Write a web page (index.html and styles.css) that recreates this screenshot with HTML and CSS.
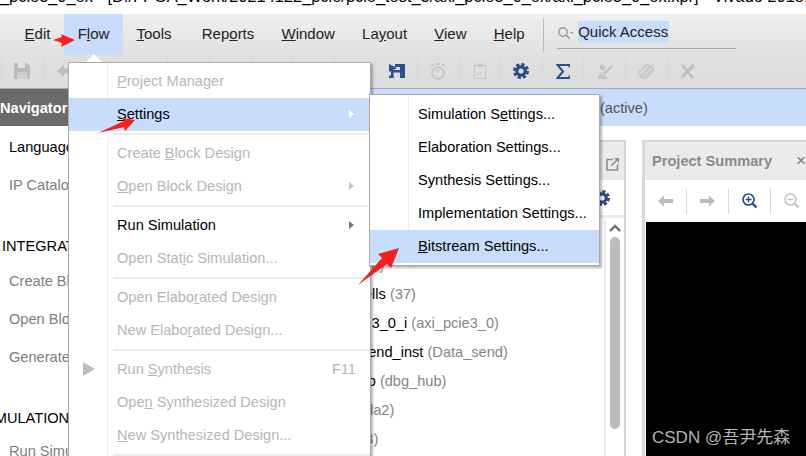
FILE: index.html
```html
<!DOCTYPE html>
<html lang="en">
<head>
<meta charset="UTF-8" />
<meta name="viewport" content="width=device-width, initial-scale=1" />
<title>Vivado - Flow menu</title>
<link rel="stylesheet" href="styles.css">
</head>
<body>
  <div class="app">
    <div class="titlebar"><div class="title-text">axi_pcie3_0_ex - [D:/FPGA_Work/20214122_pcie/pcie_test_3/axi_pcie3_0_ex/axi_pcie3_0_ex.xpr] - Vivado 2018.3</div></div>

    <div class="menubar">
      <span class="menu-title"><u>E</u>dit</span>
      <span class="menu-title active">F<u>l</u>ow</span>
      <span class="menu-title tools"><u>T</u>ools</span>
      <span class="menu-title">Rep<u>o</u>rts</span>
      <span class="menu-title"><u>W</u>indow</span>
      <span class="menu-title">La<u>y</u>out</span>
      <span class="menu-title"><u>V</u>iew</span>
      <span class="menu-title"><u>H</u>elp</span>
      <div class="quick-access">
        <svg class="search-icon" width="17" height="14" viewBox="0 0 17 14"><circle cx="6" cy="6" r="4.2" fill="none" stroke="#999" stroke-width="1.4"/><path d="M9 9l3.5 3.5" stroke="#999" stroke-width="1.6"/><path d="M13 6h3.4l-1.7 2z" fill="#999"/></svg>
        <span class="quick-text">Quick Access</span>
      </div>
    </div>

    <div class="toolbar">
      <span class="tool"><svg width="16" height="16" viewBox="0 0 16 16"><path d="M0 0h13l3 3v13H0z" fill="#bcbcbc"/><rect x="4" y="0" width="7" height="5" fill="#e2e2e2"/><rect x="3" y="9" width="10" height="7" fill="#cfcfcf"/></svg></span>
      <span class="tool"><svg width="14" height="14" viewBox="0 0 14 14"><path d="M0 7l7-6v3.500h7v5H7V13z" fill="#bdbdbd"/></svg></span>
      <span class="tool"></span><span class="tool"></span><span class="tool"></span><span class="tool"></span><span class="tool"></span><span class="tool"></span><span class="tool"></span>
      <span class="tool"><svg width="16" height="16" viewBox="0 0 16 16"><g fill="#2f4f8c"><path d="M0 1l8 4-8 4z"/><rect x="6" y="1" width="10" height="3"/><rect x="11" y="1" width="5" height="14"/><rect x="2" y="7" width="9" height="2.500"/><rect x="2" y="7" width="2.500" height="8"/><rect x="0" y="12.500" width="4.500" height="2.500"/></g></svg></span>
      <span class="tool"><svg width="16" height="17" viewBox="0 0 16 17"><circle cx="8" cy="10" r="5.800" fill="none" stroke="#c6c6c6" stroke-width="2"/><path d="M8 6.500V10" stroke="#c6c6c6" stroke-width="1.500"/><path d="M1 3l3-2M15 3l-3-2M6 1h4" stroke="#c6c6c6" stroke-width="2"/></svg></span>
      <span class="tool"><svg width="12" height="16" viewBox="0 0 12 16"><rect x=".5" y="2.500" width="11" height="13" fill="none" stroke="#c6c6c6"/><rect x="3.500" y=".5" width="5" height="3.500" fill="#c6c6c6"/><path d="M3.500 9.500l2 2 3-4" fill="none" stroke="#c6c6c6"/></svg></span>
      <span class="tool"><svg width="16" height="16" viewBox="0 0 16 16"><circle cx="8" cy="8" r="4.200" fill="none" stroke="#2b4a85" stroke-width="3.200"/><circle cx="8" cy="8" r="6.600" fill="none" stroke="#2b4a85" stroke-width="2.800" stroke-dasharray="3.200 2"/></svg></span>
      <span class="tool"><svg width="14" height="15" viewBox="0 0 14 15"><path d="M13.500 3.500V1H1.500l5.500 6.500L1.500 14h12v-2.500" fill="none" stroke="#2f4f8c" stroke-width="2"/></svg></span>
      <span class="tool"><svg width="16" height="15" viewBox="0 0 16 15"><path d="M0 15l4-7 4 4 4 3z" fill="#c4c4c4"/><path d="M2 3l3-3 4 4-3 3zM6 9l9-8 1 1-8 9z" fill="#c0c0c0"/></svg></span>
      <span class="tool"><svg width="16" height="15" viewBox="0 0 16 15"><path d="M0 9l9-9 7 6-9 9z" fill="none" stroke="#c8c8c8" stroke-width="1.800"/><path d="M4 10l7-7M7 12l6-6M2 14L15 1" stroke="#c8c8c8" stroke-width="1.300"/></svg></span>
      <span class="tool"><svg width="15" height="15" viewBox="0 0 15 15"><path d="M2 1l11 13" stroke="#c0c0c0" stroke-width="2.500"/><path d="M14 1L3 12" stroke="#c0c0c0" stroke-width="3.500"/><path d="M1 14l3-3" stroke="#c0c0c0" stroke-width="1.500"/></svg></span>
    </div>

    <div class="head-row">
      <div class="nav-title">Navigator</div>
      <div class="active-bar">(active)</div>
    </div>

    <div class="workspace">
      <div class="left-col">
        <div class="nav-item dark">Language Templates</div>
        <div class="nav-item">IP Catalog</div>
        <div class="nav-head first">INTEGRATOR</div>
        <div class="nav-item">Create Block Design</div>
        <div class="nav-item">Open Block Design</div>
        <div class="nav-item">Generate Block Design</div>
        <div class="nav-head second">SIMULATION</div>
        <div class="nav-item">Run Simulation</div>
      </div>

      <div class="mid-col">
        <div class="panel">
          <div class="panel-head">
            <svg width="13" height="13" viewBox="0 0 13 13"><path d="M7 1.500H1v10.500h10.500V6.500" fill="none" stroke="#8c8c8c" stroke-width="1.600"/><path d="M5.500 7.500L12 1M8.500 .8H12.500V4.800" fill="none" stroke="#8c8c8c" stroke-width="1.600"/></svg>
          </div>
          <div class="panel-tools">
            <svg width="16" height="16" viewBox="0 0 16 16"><circle cx="8" cy="8" r="4.200" fill="none" stroke="#2b4a85" stroke-width="3.200"/><circle cx="8" cy="8" r="6.600" fill="none" stroke="#2b4a85" stroke-width="2.800" stroke-dasharray="3.200 2"/></svg>
          </div>
          <div class="tree-wrap">
            <div class="tree">
              <div class="tree-row top-row"><span class="sub">(Top)</span></div>
              <div class="tree-row r-cells">Leaf Cells <span class="sub">(37)</span></div>
              <div class="tree-row r-pcie">axi_pcie3_0_i <span class="sub">(axi_pcie3_0)</span></div>
              <div class="tree-row r-send">Data_send_inst <span class="sub">(Data_send)</span></div>
              <div class="tree-row r-hub">dbg_hub <span class="sub">(dbg_hub)</span></div>
              <div class="tree-row r-ila">u_ila <span class="sub">(ila2)</span></div>
              <div class="tree-row r-last">u_ila <span class="sub">(ila3)</span></div>
            </div>
            <div class="scroll">
              <svg width="14" height="8" viewBox="0 0 14 8"><path d="M2 7l5-5 5 5" fill="none" stroke="#6e6e6e" stroke-width="2.400"/></svg>
              <div class="thumb"></div>
            </div>
          </div>
        </div>
      </div>

      <div class="right-col">
        <div class="summary">
          <div class="summary-head"><span>Project Summary</span><span class="close">×</span></div>
          <div class="summary-tools">
            <span class="s-tool"><svg width="15" height="12" viewBox="0 0 15 12"><path d="M0 6l6-5.500V4h9v4H6v3.500z" fill="#bcbcbc"/></svg></span>
            <span class="s-tool"><svg width="15" height="12" viewBox="0 0 15 12"><path d="M15 6L9 .5V4H0v4h9v3.500z" fill="#bcbcbc"/></svg></span>
            <span class="s-tool"><svg width="16" height="16" viewBox="0 0 16 16"><circle cx="6.500" cy="6.500" r="5.500" fill="none" stroke="#2b4a85" stroke-width="1.600"/><path d="M3.500 6.500h6M6.500 3.500v6" stroke="#2b4a85" stroke-width="1.400"/><path d="M10.500 10.500l4 4" stroke="#2b4a85" stroke-width="2.400"/></svg></span>
            <span class="s-tool"><svg width="16" height="16" viewBox="0 0 16 16"><circle cx="6.500" cy="6.500" r="5.500" fill="none" stroke="#c4c4c4" stroke-width="1.600"/><path d="M3.500 6.500h6" stroke="#c4c4c4" stroke-width="1.400"/><path d="M10.500 10.500l4 4" stroke="#c4c4c4" stroke-width="2.400"/></svg></span>
          </div>
          <div class="canvas"><span class="watermark">CSDN @吾尹先森</span></div>
        </div>
      </div>
    </div>

    <!-- open menus sit over the window -->
    <div class="notch"></div>
    <div class="menu flow-menu">
      <div class="item off"><u>P</u>roject Manager</div>
      <div class="item on"><u>S</u>ettings<span class="more"></span></div>
      <div class="sep"></div>
      <div class="item off">Create <u>B</u>lock Design</div>
      <div class="item off"><u>O</u>pen Block Design<span class="more"></span></div>
      <div class="sep"></div>
      <div class="item">Run Simulation<span class="more"></span></div>
      <div class="item off">Open Stat<u>i</u>c Simulation...</div>
      <div class="sep"></div>
      <div class="item off">Open Elabo<u>r</u>ated Design</div>
      <div class="item off">New Elabo<u>r</u>ated Design...</div>
      <div class="sep"></div>
      <div class="item off"><span class="run-mark"></span>Run <u>S</u>ynthesis<span class="key">F11</span></div>
      <div class="item off">Ope<u>n</u> Synthesized Design</div>
      <div class="item off"><u>N</u>ew Synthesized Design...</div>
      <div class="sep"></div>
    </div>
    <div class="menu settings-menu">
      <div class="item">Simulation S<u>e</u>ttings...</div>
      <div class="item">Elaboration Settings...</div>
      <div class="item">Synthesis Settings...</div>
      <div class="item">Implementation Settin<u>g</u>s...</div>
      <div class="item on"><u>B</u>itstream Settings...</div>
    </div>

    <svg class="arrows" width="806" height="456" viewBox="0 0 806 456">
      <path d="M53 40l9-3-1-3 14 6-14 7 1-4z" fill="#f5201c"/>
      <path d="M98 133l26-12-2-3 13 2-10 11-1-4z" fill="#f5201c"/>
      <path d="M358 285l24-27-4-4 21-6-8 20-4-4z" fill="#f5201c"/>
    </svg>
  </div>
</body>
</html>
```

FILE: styles.css
```css
* {
  box-sizing: border-box;
}
body {
  margin: 0;
  background: #fff;
  font-family: "Liberation Sans", Arial, sans-serif;
  font-size: 14.6px;
  color: #000;
}
.app {
  position: relative;
  width: 806px;
  height: 456px;
  overflow: hidden;
}
.titlebar {
  height: 14px;
  overflow: hidden;
}
.title-text {
  margin-top: -12px;
  font-size: 16.4px;
  line-height: 16px;
  white-space: pre;
  text-indent: -21px;
}

/* menu bar */
.menubar {
  display: flex;
  height: 41px;
  padding-left: 11px;
  background: linear-gradient(#f0f0f0, #e0e0e0);
  color: #222;
}
.menu-title {
  padding: 0 13.6px;
  font-size: 15px;
  line-height: 40px;
}
.menu-title.active {
  background: #c8dcfb;
}
.menu-title.tools {
  margin-right: 3px;
}
.quick-access {
  position: relative;
  display: flex;
  align-items: center;
  width: 193px;
  height: 34px;
  margin: 4px 0 0 5px;
  padding-left: 13px;
  border-left: 1px solid #bbb;
  font-size: 15px;
}
.quick-access::after {
  content: "";
  position: absolute;
  left: 13px;
  right: 0;
  bottom: 3px;
  height: 1px;
  background: #aaa;
}
.search-icon {
  margin: 0 4px 4px 0;
  flex: none;
}
.quick-text {
  padding: 2px 1px 3px 0;
  margin-bottom: 6px;
  background: #c8dcfb;
  color: #222;
  line-height: 17px;
}

/* toolbar */
.toolbar {
  display: grid;
  grid-template-columns: repeat(17, 41.6px);
  align-items: center;
  height: 34px;
  padding: 0 0 1px 1px;
  background: linear-gradient(#e0e0e0, #dcdcdc);
  border-bottom: 1px solid #a8a8a8;
}
.tool {
  display: flex;
  align-items: center;
  justify-content: center;
  height: 30px;
  border-left: 1px solid #d8d8d8;
}

/* main area */
.head-row {
  display: flex;
  height: 37px;
  line-height: 38px;
}
.nav-title {
  width: 200px;
  flex: none;
  background: #6b6b6b;
  color: #fff;
  font-weight: bold;
}
.active-bar {
  flex: 1;
  padding-left: 400px;
  background: #c8dcfb;
  color: #555;
}
.workspace {
  display: flex;
  height: 330px;
}
.left-col {
  width: 200px;
  flex: none;
  padding-top: 2px;
}
.nav-item {
  height: 38px;
  padding-left: 9px;
  color: #7d7d7d;
  line-height: 38px;
  white-space: nowrap;
}
.nav-item.dark {
  color: #000;
}
.nav-head {
  height: 30px;
  line-height: 30px;
  white-space: nowrap;
}
.nav-head.first {
  margin: 27px 0 1px;
  padding-left: 2px;
}
.nav-head.second {
  margin: 27px 0 -1px;
  text-indent: -19px;
}
.mid-col {
  width: 426px;
  flex: none;
}
.panel {
  height: 316px;
  margin-top: 14px;
  border-top: 2px solid #d4d4d4;
  border-right: 2px solid #d4d4d4;
}
.panel-head {
  display: flex;
  justify-content: flex-end;
  align-items: center;
  height: 38px;
  padding: 6px 5px 0 0;
  background: #ebebeb;
}
.panel-tools {
  display: flex;
  justify-content: flex-end;
  align-items: center;
  height: 38px;
  padding-right: 14px;
  border-bottom: 3px solid #ebebeb;
}
.tree-wrap {
  display: flex;
}
.tree {
  flex: 1;
  white-space: nowrap;
}
.tree-row {
  height: 29px;
  line-height: 29px;
}
.sub {
  color: #858585;
}
.top-row {
  margin-top: 33px;
  padding-left: 151px;
}
.r-cells {
  padding-left: 121px;
}
.r-pcie {
  padding-left: 118px;
}
.r-send {
  padding-left: 122px;
}
.r-hub {
  padding-left: 119px;
}
.r-ila {
  padding-left: 127px;
}
.r-last {
  padding-left: 111px;
}
.scroll {
  display: flex;
  flex-direction: column;
  align-items: center;
  width: 20px;
  height: 238px;
  padding-top: 6px;
  border-left: 2px solid #ececec;
}
.thumb {
  width: 10px;
  height: 192px;
  margin-top: 5px;
  border-radius: 5px;
  background: #bcbcbc;
}
.right-col {
  flex: 1;
  min-width: 0;
  padding: 14px 0 0 16px;
}
.summary {
  display: flex;
  flex-direction: column;
  height: 100%;
  border-left: 3px solid #d8d8d8;
  border-top: 2px solid #d4d4d4;
}
.summary-head {
  display: flex;
  justify-content: space-between;
  align-items: center;
  height: 38px;
  flex: none;
  padding-left: 7px;
  background: #ebebeb;
  color: #8a8a8a;
  font-weight: bold;
}
.close {
  font-weight: normal;
  font-size: 17px;
  color: #777;
}
.summary-tools {
  display: grid;
  grid-template-columns: repeat(3, 42px) 1fr;
  align-items: center;
  height: 42px;
  flex: none;
}
.s-tool {
  display: flex;
  align-items: center;
  justify-content: center;
  height: 25px;
  border-right: 1px solid #d8d8d8;
}
.s-tool:last-child {
  justify-content: flex-start;
  padding-left: 13px;
  border-right: none;
}
.canvas {
  display: flex;
  align-items: flex-end;
  flex: 1;
  margin-left: 1px;
  padding: 0 0 8px 6px;
  background: #000;
}
.watermark {
  color: #b4b4b4;
  font-family: "Liberation Sans", "Noto Sans CJK SC", sans-serif;
  font-size: 17px;
  white-space: nowrap;
}

/* popup menus */
.menu {
  position: absolute;
  background: #fff;
  border: 1px solid #a9a9a9;
  box-shadow: 2px 2px 2px rgba(0, 0, 0, 0.28);
}
.menu::before {
  content: "";
  position: absolute;
  top: 0;
  bottom: 0;
  left: 38px;
  width: 1px;
  background: #ececec;
}
.flow-menu {
  left: 68px;
  top: 62px;
  width: 303px;
  height: 400px;
  padding-top: 2px;
}
.settings-menu {
  left: 369px;
  top: 94px;
  width: 231px;
  padding: 3px 0 2px;
  z-index: 2;
}
.item {
  position: relative;
  display: flex;
  align-items: center;
  height: 33px;
  padding: 0 0 2px 48px;
  white-space: pre;
}
.item.off {
  color: #b6b6b6;
}
.item.on {
  background: #c8dcfb;
  z-index: 1;
}
.sep {
  height: 2px;
  margin: 2px 0 2px 44px;
  background: #ececec;
}
.more {
  position: absolute;
  right: 16px;
  top: 12px;
  border-left: 5px solid #777;
  border-top: 4.500px solid transparent;
  border-bottom: 4.500px solid transparent;
}
.item.on .more {
  border-left-color: #fff;
}
.item.off .more {
  border-left-color: #c4c4c4;
}
.key {
  position: absolute;
  right: 14px;
}
.run-mark {
  position: absolute;
  left: 14px;
  top: 9px;
  border-left: 12px solid #bcbcbc;
  border-top: 7px solid transparent;
  border-bottom: 7px solid transparent;
}
.notch {
  position: absolute;
  left: 86px;
  top: 54px;
  width: 0;
  height: 0;
  border-left: 8px solid transparent;
  border-right: 8px solid transparent;
  border-bottom: 8px solid #fff;
  z-index: 2;
}
.arrows {
  position: absolute;
  left: 0;
  top: 0;
  z-index: 3;
}
```
